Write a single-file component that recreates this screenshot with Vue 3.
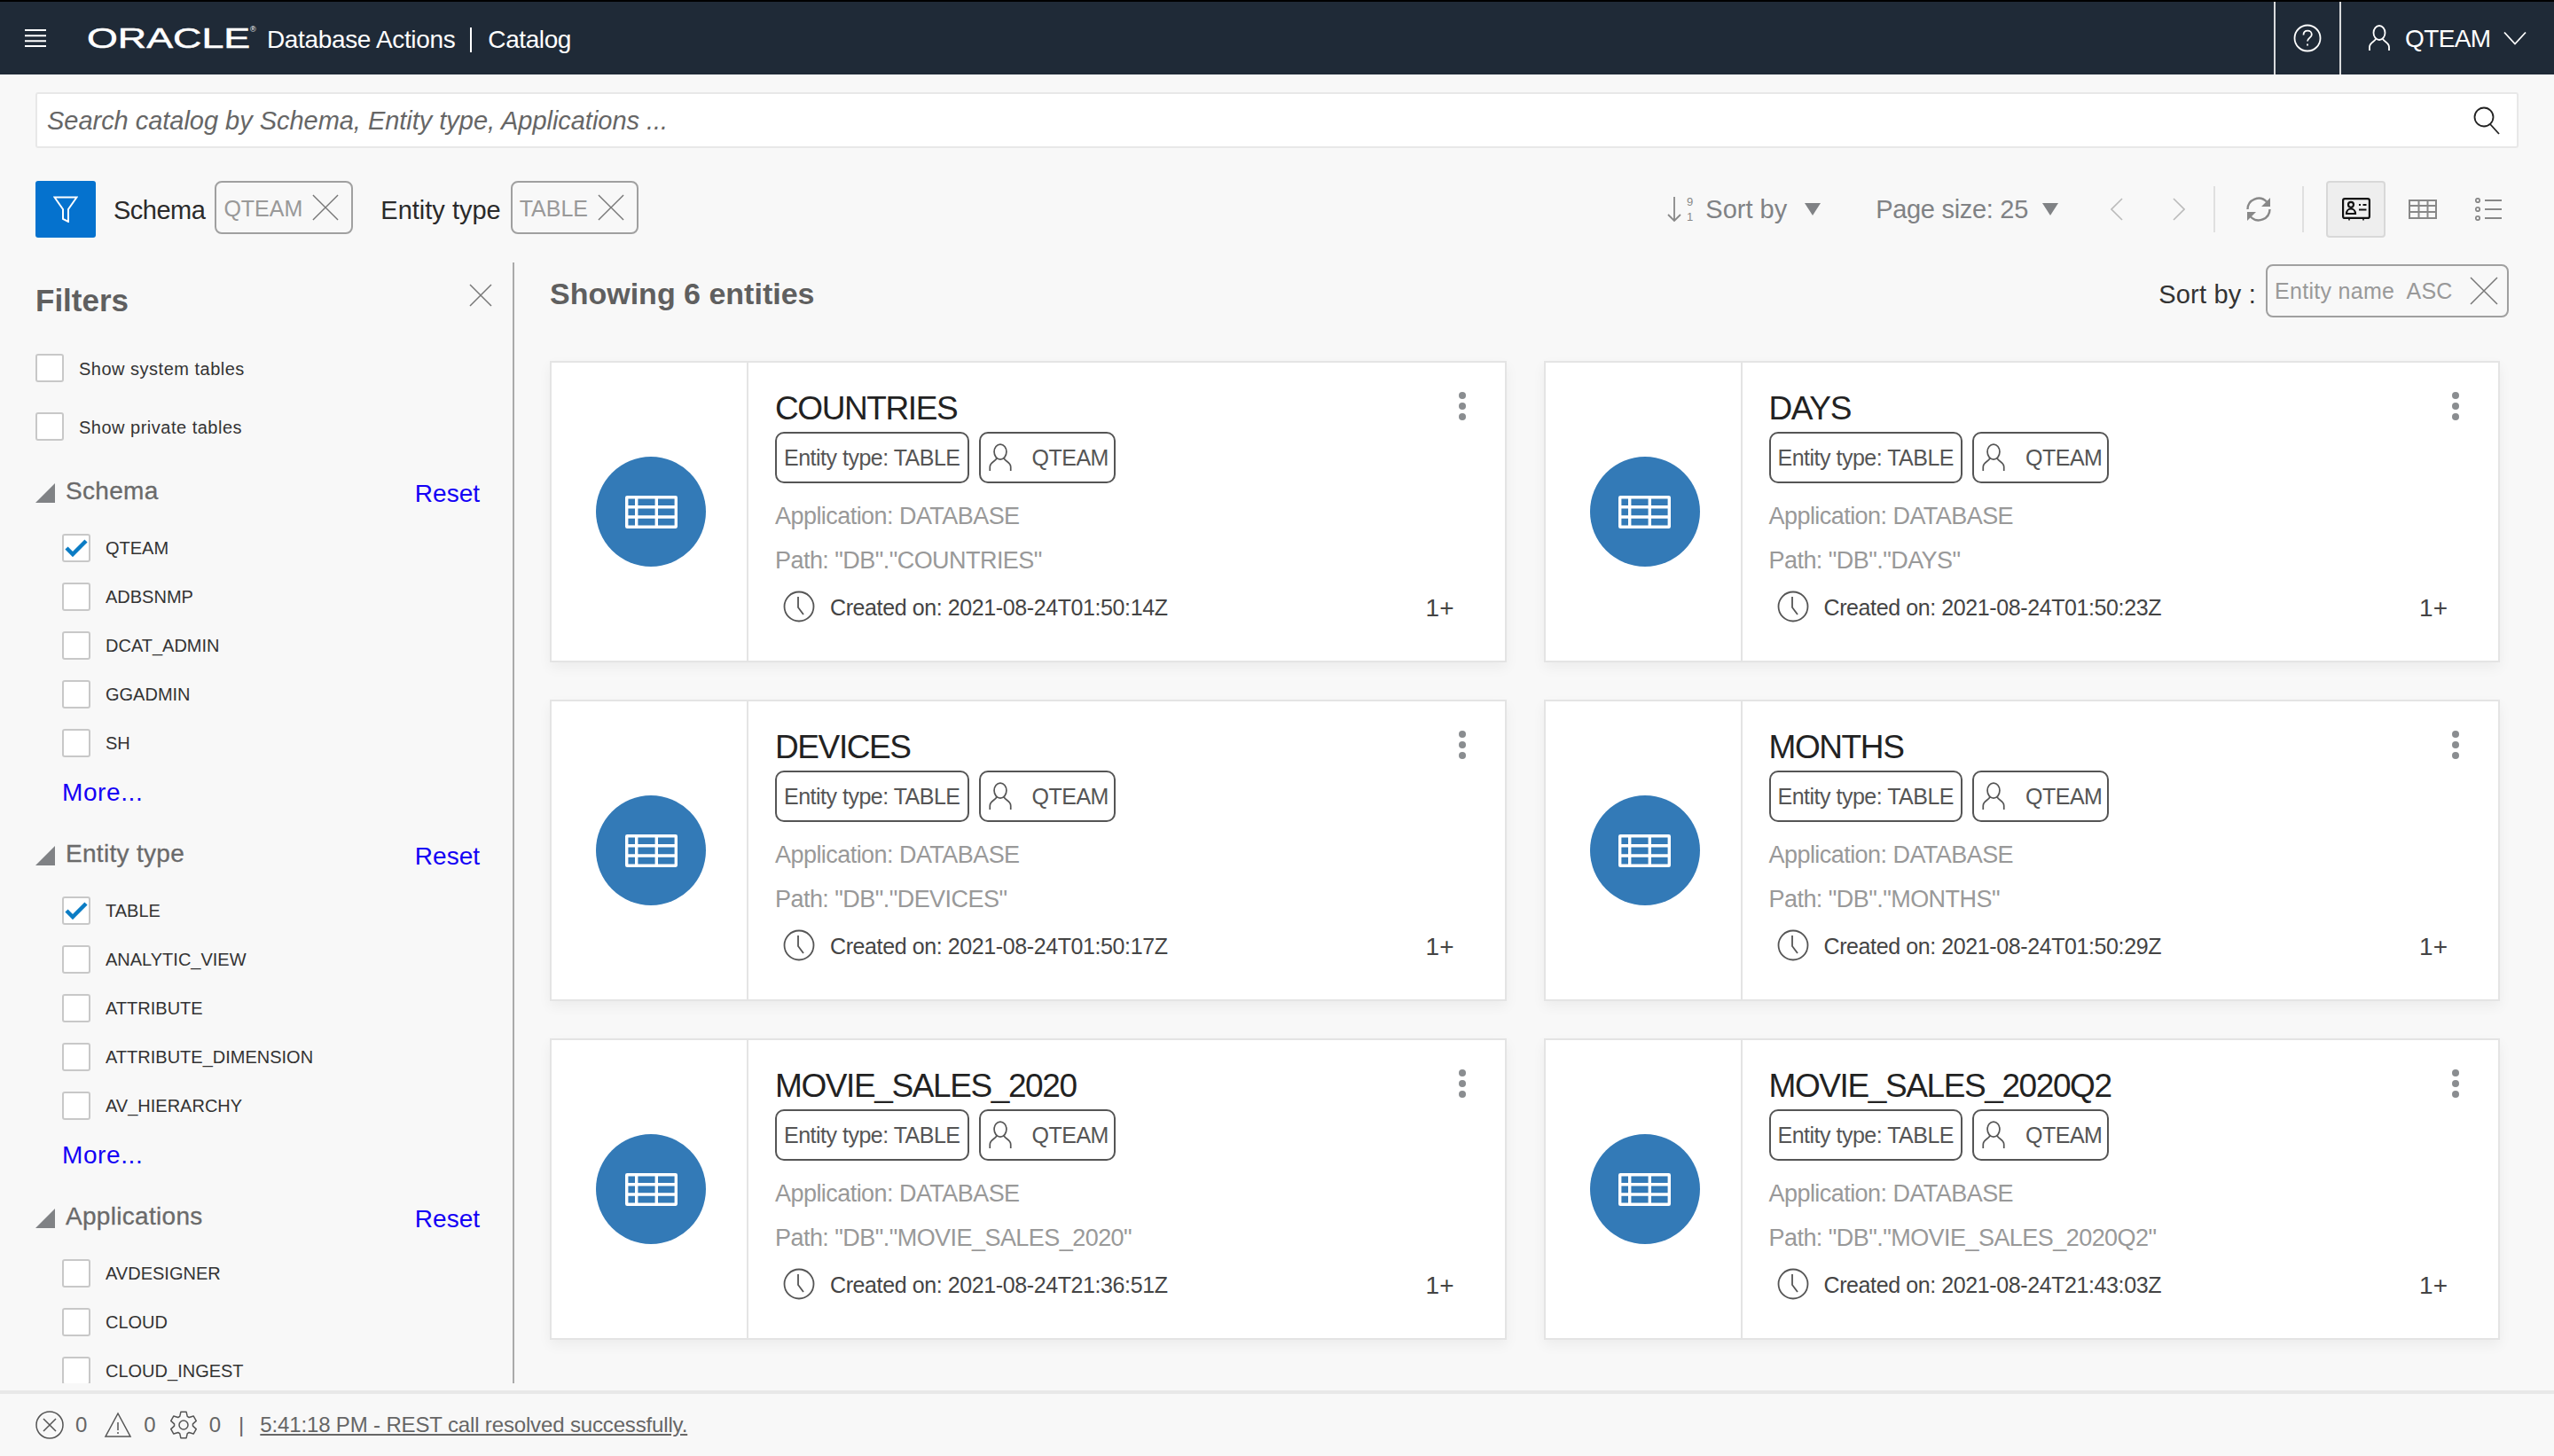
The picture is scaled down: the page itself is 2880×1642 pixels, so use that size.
<script setup>
const schemaItems = [
  { name: 'QTEAM', checked: true },
  { name: 'ADBSNMP' },
  { name: 'DCAT_ADMIN' },
  { name: 'GGADMIN' },
  { name: 'SH' },
];
const entityItems = [
  { name: 'TABLE', checked: true },
  { name: 'ANALYTIC_VIEW' },
  { name: 'ATTRIBUTE' },
  { name: 'ATTRIBUTE_DIMENSION' },
  { name: 'AV_HIERARCHY' },
];
const appItems = [
  { name: 'AVDESIGNER' },
  { name: 'CLOUD' },
  { name: 'CLOUD_INGEST' },
];
const groups = [
  { title: 'Schema', items: schemaItems, more: true },
  { title: 'Entity type', items: entityItems, more: true },
  { title: 'Applications', items: appItems, more: false },
];
const entities = [
  { name: 'COUNTRIES', created: '2021-08-24T01:50:14Z' },
  { name: 'DAYS', created: '2021-08-24T01:50:23Z' },
  { name: 'DEVICES', created: '2021-08-24T01:50:17Z' },
  { name: 'MONTHS', created: '2021-08-24T01:50:29Z' },
  { name: 'MOVIE_SALES_2020', created: '2021-08-24T21:36:51Z' },
  { name: 'MOVIE_SALES_2020Q2', created: '2021-08-24T21:43:03Z' },
];

// six teeth, one pointing straight up
const pt = (r, deg) => {
  const a = (deg * Math.PI) / 180;
  return `${(16 + r * Math.cos(a)).toFixed(2)} ${(16 + r * Math.sin(a)).toFixed(2)}`;
};
const gearPath = [0, 1, 2, 3, 4, 5]
  .map((i) => {
    const c = -90 + i * 60;
    return `${pt(10.5, c - 24)} L${pt(15, c - 12)} L${pt(15, c + 12)} L${pt(10.5, c + 24)}`;
  })
  .join(' L');
</script>

<template>
  <div class="page">
    <header class="topbar">
      <svg class="burger" width="24" height="20" viewBox="0 0 24 20" fill="none" stroke="#fff" stroke-width="2">
        <path d="M0 1h24M0 7.300h24M0 13.200h24M0 19h24" />
      </svg>
      <div class="logo">
        <span class="logo-text">ORACLE</span>
        <span class="logo-reg">®</span>
      </div>
      <span class="app-name first-name">Database Actions</span>
      <span class="app-sep"></span>
      <span class="app-name">Catalog</span>
      <div class="top-right">
        <div class="help">
          <svg width="32" height="32" viewBox="0 0 32 32" fill="none" stroke="#fff" stroke-width="1.800">
            <circle cx="16" cy="16" r="14.500" />
            <path d="M11.500 12.500c0-3 2-4.800 4.700-4.800s4.600 1.800 4.600 4.300c0 3.500-4.800 3.800-4.800 7.500" />
            <path d="M16 22.500v2" />
          </svg>
        </div>
        <div class="user">
          <svg width="26" height="30" viewBox="0 0 26 30" fill="none" stroke="#fff" stroke-width="1.800">
            <ellipse cx="13" cy="9" rx="6.500" ry="8" />
            <path d="M9 16c-1 3-7 4-7 9v4M17 16c1 3 7 4 7 9v4" />
          </svg>
          <span>QTEAM</span>
          <svg width="26" height="16" viewBox="0 0 26 16" fill="none" stroke="#fff" stroke-width="1.800">
            <path d="M1 1.500l12 13 12-13" />
          </svg>
        </div>
      </div>
    </header>

    <div class="search">
      <span class="search-text">Search catalog by Schema, Entity type, Applications ...</span>
      <svg width="32" height="32" viewBox="0 0 32 32" fill="none" stroke="#222" stroke-width="1.800">
        <ellipse cx="13" cy="12" rx="10.500" ry="10.500" />
        <path d="M20 20l10 11" />
      </svg>
    </div>

    <div class="toolbar">
      <button class="filter-btn">
        <svg width="28" height="30" viewBox="0 0 28 30" fill="none" stroke="#fff" stroke-width="2">
          <path d="M1.500 1.500h25L17 15v14l-6-3V15z" />
        </svg>
      </button>
      <span class="crumb-label first">Schema</span>
      <span class="crumb-chip top-chip">QTEAM
        <svg width="30" height="30" viewBox="0 0 32 32" stroke="#777" stroke-width="1.500"><path d="M1 1l30 30M31 1L1 31" /></svg>
      </span>
      <span class="crumb-label second">Entity type</span>
      <span class="crumb-chip top-chip">TABLE
        <svg width="30" height="30" viewBox="0 0 32 32" stroke="#777" stroke-width="1.500"><path d="M1 1l30 30M31 1L1 31" /></svg>
      </span>

      <div class="tools">
        <svg class="sort-icon" width="34" height="30" viewBox="0 0 34 30" fill="none" stroke="#888" stroke-width="1.800">
          <path d="M8 1v27M1 21l7 7 7-7" />
          <text x="22" y="11" font-size="13" font-family="Liberation Sans, sans-serif" fill="#888" stroke="none">9</text>
          <text x="22" y="28" font-size="13" font-family="Liberation Sans, sans-serif" fill="#888" stroke="none">1</text>
        </svg>
        <span class="tool-text sort-text">Sort by</span>
        <span class="caret"></span>
        <span class="tool-text page-text">Page size: 25</span>
        <span class="caret page-caret"></span>
        <svg class="prev" width="14" height="26" viewBox="0 0 14 26" fill="none" stroke="#bbb" stroke-width="1.600"><path d="M13 1L1 13l12 12" /></svg>
        <svg class="next" width="14" height="26" viewBox="0 0 14 26" fill="none" stroke="#bbb" stroke-width="1.600"><path d="M1 1l12 12L1 25" /></svg>
        <span class="tool-sep first-sep"></span>
        <svg class="refresh" width="30" height="30" viewBox="0 0 30 30" fill="none" stroke="#888" stroke-width="2.400">
          <path d="M2.500 15A12.500 12.500 0 0 1 24 6.500" />
          <path d="M27.500 15A12.500 12.500 0 0 1 6 23.500" />
          <path d="M28 2v10H18zM2 28V18h10z" fill="#888" stroke="none" />
        </svg>
        <span class="tool-sep"></span>
        <button class="view-btn">
          <svg width="32" height="26" viewBox="0 0 32 26" fill="none" stroke="#111" stroke-width="2.200">
            <rect x="1.100" y="1.100" width="29.800" height="21.800" rx="2" />
            <path d="M8 23v2.500M24 23v2.500" stroke-width="1.600" />
            <circle cx="10" cy="7.800" r="3" />
            <path d="M5 18c0-3 2-5.500 5-5.500s5 2.500 5 5.500z" />
            <path d="M19 8h2M23.500 8h4M19 13.500h8.500" stroke-width="1.800" />
          </svg>
        </button>
        <svg class="grid-icon" width="32" height="22" viewBox="0 0 32 22" fill="none" stroke="#888" stroke-width="2">
          <rect x="1" y="1" width="30" height="20" />
          <path d="M1 7h30M1 14h30M11.500 1v20M21.500 1v20" />
        </svg>
        <svg class="list-icon" width="30" height="26" viewBox="0 0 30 26" fill="none" stroke="#888" stroke-width="1.800">
          <circle cx="3" cy="3" r="2.200" /><circle cx="3" cy="13" r="2.200" /><circle cx="3" cy="23" r="2.200" />
          <path d="M11 3h19M11 13h19M11 23h19" />
        </svg>
      </div>
    </div>

    <div class="content">
      <aside class="sidebar">
        <div class="filters-head">
          <h2>Filters</h2>
          <svg width="26" height="26" viewBox="0 0 26 26" stroke="#777" stroke-width="1.500"><path d="M1 1l24 24M25 1L1 25" /></svg>
        </div>
        <label class="opt"><span class="box"></span><span class="label-text">Show system tables</span></label>
        <label class="opt"><span class="box"></span><span class="label-text">Show private tables</span></label>

        <section v-for="group in groups" :key="group.title" class="group">
          <div class="group-head">
            <span class="tri"></span>
            <span class="group-title">{{ group.title }}</span>
            <a class="link reset">Reset</a>
          </div>
          <label v-for="item in group.items" :key="item.name" class="item">
            <span class="box">
              <svg v-if="item.checked" width="26" height="20" viewBox="0 0 26 20" fill="none" stroke="#0b7cc4" stroke-width="4.500">
                <path d="M2 10l7 7L24 2" />
              </svg>
            </span>
            <span class="label-text">{{ item.name }}</span>
          </label>
          <a v-if="group.more" class="link more">More...</a>
        </section>
      </aside>

      <main class="main">
        <div class="main-head">
          <h2>Showing 6 entities</h2>
          <span class="sort-label">Sort by :</span>
          <span class="crumb-chip sort-chip">Entity name&nbsp; ASC
            <svg width="32" height="32" viewBox="0 0 32 32" stroke="#777" stroke-width="1.500"><path d="M1 1l30 30M31 1L1 31" /></svg>
          </span>
        </div>
        <div class="cards">
          <article v-for="entity in entities" :key="entity.name" class="card">
            <div class="card-icon">
              <div class="circle">
                <svg width="59" height="37" viewBox="0 0 59 37" fill="none" stroke="#fff" stroke-width="3.400">
                  <rect x="1.700" y="1.700" width="55.600" height="33.600" rx="0.500" />
                  <path d="M1.700 12.700h55.600M1.700 24h55.600M12.700 1.700v33.600M35.300 1.700v33.600" />
                </svg>
              </div>
            </div>
            <div class="card-body">
              <div class="title-row">
                <h3>{{ entity.name }}</h3>
                <svg class="kebab" width="10" height="34" viewBox="0 0 10 34" fill="#8a8d90">
                  <circle cx="5" cy="5" r="4" /><circle cx="5" cy="17" r="4" /><circle cx="5" cy="29" r="4" />
                </svg>
              </div>
              <div class="chips">
                <span class="chip">Entity type: TABLE</span>
                <span class="chip owner">
                  <svg width="28" height="32" viewBox="0 0 26 30" fill="none" stroke="#555" stroke-width="1.600">
                    <ellipse cx="13" cy="9" rx="6.500" ry="8" />
                    <path d="M9 16c-1 3-7 4-7 9v4M17 16c1 3 7 4 7 9v4" />
                  </svg>
                  QTEAM
                </span>
              </div>
              <p class="meta">Application: DATABASE</p>
              <p class="meta">Path: "DB"."{{ entity.name }}"</p>
              <div class="created">
                <svg width="36" height="36" viewBox="0 0 36 36" fill="none" stroke="#555" stroke-width="1.800">
                  <circle cx="18" cy="18" r="16.500" />
                  <path d="M17 7v12l6 8" />
                </svg>
                <span class="created-text">Created on: {{ entity.created }}</span>
                <span class="count">1+</span>
              </div>
            </div>
          </article>
        </div>
      </main>
    </div>

    <footer class="status">
      <svg width="32" height="32" viewBox="0 0 32 32" fill="none" stroke="#555" stroke-width="1.500">
        <circle cx="16" cy="16" r="15" />
        <path d="M9 9l14 14M23 9L9 23" />
      </svg>
      <span class="num">0</span>
      <svg class="warn" width="32" height="30" viewBox="0 0 32 30" fill="none" stroke="#555" stroke-width="1.500">
        <path d="M16 2L2 28h28z" />
        <path d="M16 12v9M16 23v2" />
      </svg>
      <span class="num">0</span>
      <svg class="gear" width="32" height="32" viewBox="0 0 32 32" fill="none" stroke="#555" stroke-width="1.500" stroke-linejoin="round">
        <circle cx="16" cy="16" r="5" />
        <path :d="'M' + gearPath + 'z'" />
      </svg>
      <span class="num">0</span>
      <span class="bar">|</span>
      <a class="status-link">5:41:18 PM - REST call resolved successfully.</a>
    </footer>
  </div>
</template>

<style scoped>
.page {
  display: flex;
  flex-direction: column;
  height: 100vh;
  background: #f8f8f8;
  color: #333;
  font-family: "Liberation Sans", Arial, sans-serif;
  overflow: hidden;
}

.topbar {
  flex: none;
  display: flex;
  align-items: center;
  height: 84px;
  box-sizing: border-box;
  border-top: 2px solid #000;
  background: #1f2a37;
  color: #fff;
  padding-left: 28px;
}

.logo {
  display: flex;
  align-items: flex-start;
  width: 192px;
  margin-left: 46px;
  color: #fff;
}

.logo-text {
  flex: none;
  width: 184px;
  font-size: 32px;
  line-height: 36px;
  -webkit-text-stroke: 0.5px #fff;
  transform: scaleX(1.4);
  transform-origin: left center;
}

.logo-reg {
  font-size: 9px;
  line-height: 16px;
}

.app-name {
  font-size: 28px;
  letter-spacing: -0.4px;
  margin: 3px 0 0 0;
}

.first-name {
  margin-left: 11px;
  letter-spacing: -0.35px;
}

.app-sep {
  width: 2px;
  height: 28px;
  background: #fff;
  margin: 4px 18px 0 17px;
}

.top-right {
  margin-left: auto;
  display: flex;
  align-self: stretch;
}

.help {
  width: 72px;
  border-left: 2px solid #d8dadc;
  border-right: 2px solid #d8dadc;
  display: flex;
  align-items: center;
  justify-content: center;
}

.user {
  width: 240px;
  box-sizing: border-box;
  display: flex;
  align-items: center;
  padding-left: 30px;
  font-size: 28px;
}

.user span {
  margin: 2px 14px 0 16px;
  letter-spacing: -0.6px;
}

.search {
  flex: none;
  display: flex;
  align-items: center;
  justify-content: space-between;
  height: 63px;
  box-sizing: border-box;
  margin: 20px 40px 0;
  padding: 0 18px 0 11px;
  background: #fff;
  border: 2px solid #e8e8e8;
  border-radius: 3px;
}

.search-text {
  margin-top: 2px;
  font-size: 29px;
  font-style: italic;
  letter-spacing: -0.03px;
  color: #666;
}

.toolbar {
  flex: none;
  display: flex;
  align-items: center;
  height: 64px;
  margin: 37px 59px 0 40px;
}

.filter-btn {
  width: 68px;
  height: 64px;
  border: none;
  border-radius: 3px;
  background: #0572ce;
  display: flex;
  align-items: center;
  justify-content: center;
}

.crumb-label {
  margin-top: 2px;
  font-size: 29px;
  color: #2a2a2a;
}

.crumb-label.first {
  margin-left: 20px;
  letter-spacing: -0.5px;
}

.crumb-label.second {
  margin-left: 31px;
}

.crumb-chip {
  display: inline-flex;
  align-items: center;
  justify-content: space-between;
  height: 60px;
  box-sizing: border-box;
  margin-left: 11px;
  padding: 0 10px 0 8px;
  gap: 11px;
  border: 2px solid #a0a0a0;
  border-radius: 8px;
  font-size: 25px;
  color: #999;
}

.top-chip {
  margin-top: -4px;
  padding-top: 2px;
  padding-right: 14px;
}

.top-chip svg {
  margin-top: -2px;
}

.tools {
  margin-left: auto;
  display: flex;
  align-items: center;
}

.tool-text {
  font-size: 29px;
  color: #808285;
}

.sort-text {
  margin-left: 9px;
}

.caret {
  width: 0;
  height: 0;
  margin-left: 20px;
  border-left: 9px solid transparent;
  border-right: 9px solid transparent;
  border-top: 14px solid #808285;
}

.page-caret {
  margin-left: 16px;
}

.page-text {
  margin-left: 62px;
  letter-spacing: -0.3px;
}

.prev {
  margin-left: 59px;
}

.next {
  margin-left: 56px;
}

.tool-sep {
  width: 2px;
  height: 52px;
  background: #e0e0e0;
}

.first-sep {
  margin-left: 32px;
}

.refresh {
  margin: 0 34px;
}

.view-btn {
  width: 67px;
  height: 64px;
  margin-left: 25px;
  background: #eee;
  border: 2px solid #d8d8d8;
  border-radius: 4px;
  display: flex;
  align-items: center;
  justify-content: center;
  padding: 0;
}

.grid-icon {
  margin-left: 26px;
}

.list-icon {
  margin-left: 43px;
}

.content {
  flex: 1;
  display: flex;
  min-height: 0;
  margin-top: 28px;
}

.sidebar {
  flex: none;
  width: 580px;
  box-sizing: border-box;
  margin-bottom: 8px;
  padding: 20px 37px 0 40px;
  border-right: 2px solid #aaa;
  overflow: hidden;
}

.filters-head {
  display: flex;
  align-items: flex-start;
  justify-content: space-between;
  height: 40px;
  margin-right: -14px;
  margin-bottom: 26px;
}

.filters-head h2 {
  margin: 3px 0 0;
  font-size: 35px;
  line-height: 40px;
  color: #5f5f5f;
}

.filters-head svg {
  margin-top: 4px;
}

.opt,
.item {
  display: flex;
  align-items: center;
  font-size: 20px;
  color: #333;
}

.opt {
  height: 66px;
  letter-spacing: 0.5px;
}

.item {
  height: 55px;
  padding-left: 30px;
}

.label-text {
  margin-top: 2px;
}

.box {
  flex: none;
  width: 32px;
  height: 32px;
  box-sizing: border-box;
  margin-right: 17px;
  display: flex;
  align-items: center;
  justify-content: center;
  background: #fff;
  border: 2px solid #c8c8c8;
  border-radius: 3px;
}

.group {
  margin-top: 22px;
}

.opt + .group {
  margin-top: 19px;
}

.group-head {
  display: flex;
  align-items: center;
  height: 40px;
  margin-bottom: 17px;
}

.tri {
  width: 0;
  height: 0;
  border-left: 22px solid transparent;
  border-bottom: 22px solid #808285;
  margin-top: 6px;
}

.group-title {
  margin: 1px 0 0 12px;
  font-size: 28px;
  letter-spacing: 0.3px;
  -webkit-text-stroke: 0.3px #6a6a6a;
  color: #6a6a6a;
}

.link {
  color: #1400f5;
  font-size: 28px;
}

.reset {
  margin-left: auto;
  margin-top: 8px;
}

.more {
  display: flex;
  align-items: center;
  height: 55px;
  box-sizing: border-box;
  padding: 2px 0 0 30px;
  letter-spacing: 0.6px;
}

.main {
  flex: 1;
  min-width: 0;
  padding: 2px 51px 0 40px;
}

.main-head {
  display: flex;
  align-items: center;
  height: 60px;
  margin-bottom: 49px;
}

.main-head h2 {
  margin: 6px auto 0 0;
  font-size: 34px;
  color: #5f5f5f;
}

.sort-label {
  margin-top: 8px;
  font-size: 29px;
  letter-spacing: 0.2px;
  color: #333;
}

.sort-chip {
  width: 274px;
  letter-spacing: 0.3px;
}

.cards {
  display: grid;
  grid-template-columns: repeat(2, 1fr);
  gap: 42px;
  margin-right: 10px;
}

.card {
  display: flex;
  height: 340px;
  box-sizing: border-box;
  background: #fff;
  border: 2px solid #e4e4e4;
  box-shadow: 0 6px 14px rgba(0, 0, 0, 0.05);
}

.card-icon {
  flex: none;
  width: 216px;
  padding-left: 4px;
  display: flex;
  align-items: center;
  justify-content: center;
  border-right: 2px solid #e4e4e4;
  margin-right: 30px;
}

.circle {
  width: 124px;
  height: 124px;
  border-radius: 50%;
  background: #337ab7;
  display: flex;
  align-items: center;
  justify-content: center;
}

.card-body {
  flex: 1;
  min-width: 0;
  padding: 28px 43px 0 0;
}

.title-row {
  display: flex;
  justify-content: space-between;
  height: 44px;
}

.title-row h3 {
  margin: 2px 0 0;
  font-size: 37px;
  font-weight: 400;
  line-height: 44px;
  letter-spacing: -1.400px;
  color: #222;
}

.kebab {
  margin-top: 4px;
}

.chips {
  display: flex;
  gap: 11px;
  margin-top: 6px;
}

.chip {
  display: flex;
  align-items: center;
  height: 58px;
  box-sizing: border-box;
  padding: 0 8px;
  background: #fff;
  border: 2px solid #555;
  border-radius: 10px;
  font-size: 25px;
  letter-spacing: -0.5px;
  color: #555;
}

.owner {
  gap: 22px;
  padding-right: 6px;
}

.meta {
  margin: 2px 0 -2px;
  height: 50px;
  line-height: 50px;
  font-size: 27px;
  letter-spacing: -0.55px;
  color: #999;
}

.meta:first-of-type {
  margin-top: 12px;
}

.created {
  display: flex;
  align-items: center;
  height: 50px;
  margin-top: 4px;
  padding-left: 9px;
  font-size: 25px;
  color: #444;
}

.created-text {
  margin: 2px 0 0 17px;
  letter-spacing: -0.4px;
}

.count {
  margin: 4px 14px 0 auto;
  font-size: 28px;
}

.status {
  flex: none;
  display: flex;
  align-items: center;
  height: 74px;
  box-sizing: border-box;
  padding-left: 40px;
  border-top: 4px solid #e8e8e8;
  font-size: 24px;
  color: #666;
}

.num {
  margin-left: 13px;
}

.warn {
  margin-left: 19px;
}

.gear {
  margin-left: 15px;
}

.bar {
  margin: 0 18px 0 20px;
}

.status-link {
  text-decoration: underline;
  letter-spacing: -0.15px;
}
</style>

<style>
body {
  margin: 0;
}
</style>
